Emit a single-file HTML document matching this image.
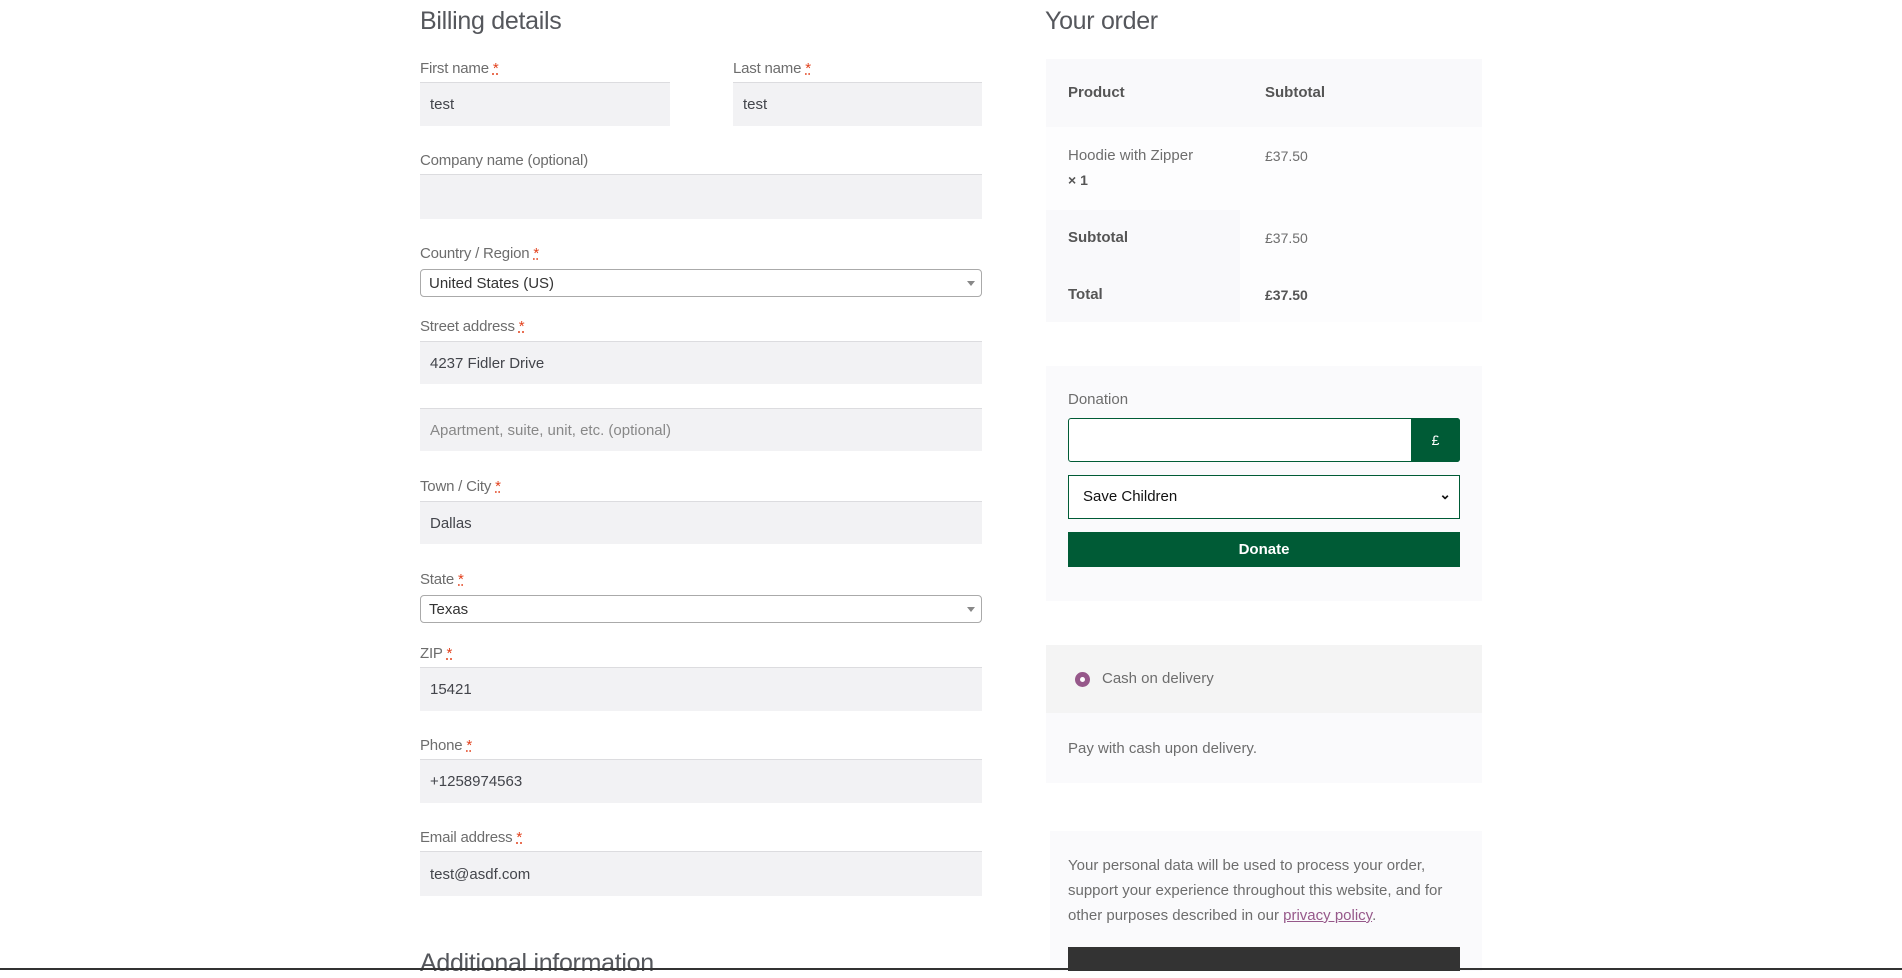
<!DOCTYPE html>
<html><head><meta charset="utf-8"><style>
*{box-sizing:border-box;margin:0;padding:0}
body{width:1902px;height:970px;overflow:hidden;background:#fff;font-family:"Liberation Sans",sans-serif;color:#6d6d6d;position:relative}
#w{position:absolute;left:0;top:1px;width:1902px;height:970px}
.a{position:absolute}
h2{position:absolute;font-weight:300;font-size:25px;color:#55575c;letter-spacing:-0.3px}
.lbl{position:absolute;font-size:15px;color:#6d6d6d;letter-spacing:-0.2px}
.lbl i{color:#e2401c;font-style:normal;text-decoration:underline dotted}
.inp{position:absolute;background:#f2f2f4;border-top:1px solid #dcdcdf;font-size:15px;color:#43454b;padding-left:10px;display:flex;align-items:center}
.sel{position:absolute;background:#fff;border:1px solid #aaa;border-radius:4px;font-size:15px;color:#333;padding-left:8px;display:flex;align-items:center}
.sel:after{content:"";position:absolute;right:6px;top:11px;border:4px solid transparent;border-top:5px solid #888}
.t{position:absolute;font-size:15px;color:#6d6d6d}
b{font-weight:bold;color:#555}
</style></head><body><div id="w">
<h2 style="left:420px;top:6px">Billing details</h2>
<h2 style="left:1045px;top:6px">Your order</h2>

<div class="lbl" style="left:420px;top:59px">First name <i>*</i></div>
<div class="inp" style="left:420px;top:81px;width:250px;height:44px">test</div>
<div class="lbl" style="left:733px;top:59px">Last name <i>*</i></div>
<div class="inp" style="left:733px;top:81px;width:249px;height:44px">test</div>
<div class="lbl" style="left:420px;top:151px">Company name (optional)</div>
<div class="inp" style="left:420px;top:173px;width:562px;height:45px"></div>
<div class="lbl" style="left:420px;top:244px">Country / Region <i>*</i></div>
<div class="sel" style="left:420px;top:268px;width:562px;height:28px">United States (US)</div>
<div class="lbl" style="left:420px;top:317px">Street address <i>*</i></div>
<div class="inp" style="left:420px;top:340px;width:562px;height:43px">4237 Fidler Drive</div>
<div class="inp" style="left:420px;top:407px;width:562px;height:43px;color:#888">Apartment, suite, unit, etc. (optional)</div>
<div class="lbl" style="left:420px;top:477px">Town / City <i>*</i></div>
<div class="inp" style="left:420px;top:500px;width:562px;height:43px">Dallas</div>
<div class="lbl" style="left:420px;top:570px">State <i>*</i></div>
<div class="sel" style="left:420px;top:594px;width:562px;height:28px">Texas</div>
<div class="lbl" style="left:420px;top:644px">ZIP <i>*</i></div>
<div class="inp" style="left:420px;top:666px;width:562px;height:44px">15421</div>
<div class="lbl" style="left:420px;top:736px">Phone <i>*</i></div>
<div class="inp" style="left:420px;top:758px;width:562px;height:44px">+1258974563</div>
<div class="lbl" style="left:420px;top:828px">Email address <i>*</i></div>
<div class="inp" style="left:420px;top:850px;width:562px;height:45px">test@asdf.com</div>
<h2 style="left:420px;top:948px">Additional information</h2>

<div class="a" style="left:1046px;top:58px;width:436px;height:263px;background:#fdfdfe"></div>
<div class="a" style="left:1046px;top:58px;width:436px;height:68px;background:#f9f9fb"></div>
<div class="a" style="left:1046px;top:209px;width:194px;height:112px;background:#f9f9fb"></div>
<div class="t" style="left:1068px;top:83px"><b>Product</b></div>
<div class="t" style="left:1265px;top:83px"><b>Subtotal</b></div>
<div class="t" style="left:1068px;top:146px">Hoodie with Zipper</div>
<div class="t" style="left:1068px;top:171px;font-size:14px"><b>× 1</b></div>
<div class="t" style="left:1265px;top:147px;font-size:14px">£37.50</div>
<div class="t" style="left:1068px;top:228px"><b>Subtotal</b></div>
<div class="t" style="left:1265px;top:229px;font-size:14px">£37.50</div>
<div class="t" style="left:1068px;top:285px"><b>Total</b></div>
<div class="t" style="left:1265px;top:286px;font-size:14px"><b>£37.50</b></div>

<div class="a" style="left:1046px;top:365px;width:436px;height:235px;background:#fafafc"></div>
<div class="t" style="left:1068px;top:390px">Donation</div>
<div class="a" style="left:1068px;top:417px;width:392px;height:44px;border:1px solid #005b36;border-radius:3px;background:#fff"></div>
<div class="a" style="left:1411px;top:417px;width:49px;height:44px;background:#005b36;border-radius:0 3px 3px 0;color:#fff;font-size:14px;text-align:center;line-height:44px">£</div>
<div class="a" style="left:1068px;top:474px;width:392px;height:44px;border:1px solid #005b36;background:#fff;color:#111;font-size:15px;line-height:42px;padding-left:14px">Save Children<span style="position:absolute;right:8px;top:-3px;font-size:14px;font-weight:bold">&#8964;</span></div>
<div class="a" style="left:1068px;top:531px;width:392px;height:35px;background:#005b36;color:#fff;font-weight:bold;font-size:15px;text-align:center;line-height:35px">Donate</div>

<div class="a" style="left:1046px;top:644px;width:436px;height:138px;background:#fafafc"></div>
<div class="a" style="left:1046px;top:644px;width:436px;height:68px;background:#f4f4f4"></div>
<div class="a" style="left:1075px;top:671px;width:15px;height:15px;border-radius:50%;background:#96588a;border:4px solid #96588a"><div style="width:5px;height:5px;background:#fff;border-radius:50%;margin:1px"></div></div>
<div class="t" style="left:1102px;top:669px">Cash on delivery</div>
<div class="t" style="left:1068px;top:739px">Pay with cash upon delivery.</div>

<div class="a" style="left:1050px;top:830px;width:432px;height:140px;background:#fafafc"></div>
<div class="t" style="left:1068px;top:852px;line-height:25px;width:400px">Your personal data will be used to process your order, support your experience throughout this website, and for other purposes described in our <span style="color:#96588a;text-decoration:underline">privacy policy</span>.</div>
<div class="a" style="left:1068px;top:946px;width:392px;height:24px;background:#333"></div>
</div>
<div class="a" style="left:0;top:968px;width:1902px;height:2px;background:#333"></div>
</body></html>
